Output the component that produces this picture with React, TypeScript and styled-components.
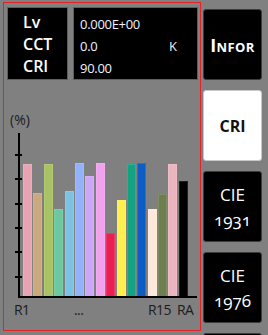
import React from "react";
import styled, { createGlobalStyle } from "styled-components";

const GlobalStyle = createGlobalStyle`
  html, body {
    margin: 0;
    padding: 0;
    background: #808080;
    overflow: hidden;
  }
  body {
    font-family: "Open Sans", "DejaVu Sans", sans-serif;
  }
`;

const bars = [
  { h: 132, color: "#e8a4b2" },
  { h: 103, color: "#caa97e" },
  { h: 132, color: "#a9c263" },
  { h: 87, color: "#6cc89e" },
  { h: 105, color: "#7cc2e2" },
  { h: 133, color: "#92b2fb" },
  { h: 120, color: "#cda7f7" },
  { h: 133, color: "#f0a2ee" },
  { h: 63, color: "#ea1e50" },
  { h: 96, color: "#fdf04e" },
  { h: 132, color: "#12a482" },
  { h: 133, color: "#0c5ec6" },
  { h: 87, color: "#fee8da" },
  { h: 102, color: "#6e7f4f" },
  { h: 132, color: "#ebb5c0" },
  { h: 115, color: "#000000" },
];

const ticks = [21, 45, 70, 94, 118, 143];

const App: React.FC = () => {
  return (
    <Screen>
      <GlobalStyle />
      <Panel>
        <TopRow>
          <NameBox>
            <Name>Lv</Name>
            <Name>CCT</Name>
            <Name>CRI</Name>
          </NameBox>
          <ValueBox>
            <Value>0.000E+00</Value>
            <Unit />
            <Value>0.0</Value>
            <Unit>K</Unit>
            <Value>90.00</Value>
            <Unit />
          </ValueBox>
        </TopRow>
        <PercentLabel>(%)</PercentLabel>
        <Plot>
          {ticks.map((t) => (
            <Tick key={t} style={{ top: t }} />
          ))}
          {bars.map((b, i) => (
            <Bar key={i} $color={b.color} style={{ height: b.h }} />
          ))}
        </Plot>
        <AxisLabels>
          <AxisLabel>R1</AxisLabel>
          <AxisLabel>...</AxisLabel>
          <AxisLabel>R15</AxisLabel>
          <AxisLabel>RA</AxisLabel>
        </AxisLabels>
      </Panel>
      <Menu>
        <MenuButton>
          <InforText>Infor</InforText>
        </MenuButton>
        <MenuButton $active>
          <ActiveText>CRI</ActiveText>
        </MenuButton>
        <MenuButton>
          <CieText>
            CIE
            <br />
            1931
          </CieText>
        </MenuButton>
        <MenuButton>
          <CieText>
            CIE
            <br />
            1976
          </CieText>
        </MenuButton>
        <MenuButton />
      </Menu>
    </Screen>
  );
};

export default App;

const Screen = styled.div`
  display: flex;
  align-items: flex-start;
  width: 268px;
  height: 335px;
  overflow: hidden;
`;

const Panel = styled.div`
  box-sizing: border-box;
  width: 198px;
  height: 329px;
  margin: 2px 0 0 3px;
  padding: 4px 2px 0 3px;
  border: 1px solid #e3222a;
  display: flex;
  flex-direction: column;
`;

const TopRow = styled.div`
  display: flex;
  gap: 5px;
`;

const NameBox = styled.div`
  box-sizing: border-box;
  width: 61px;
  height: 73px;
  padding: 3px 0 0 15px;
  background: #000;
  border: 1px solid #5e5e5e;
  display: flex;
  flex-direction: column;
`;

const Name = styled.span`
  color: #fff;
  font-size: 16px;
  font-weight: 600;
  line-height: 22px;
`;

const ValueBox = styled.div`
  box-sizing: border-box;
  width: 125px;
  height: 73px;
  padding: 5px 0 0 6px;
  background: #000;
  border: 1px solid #5e5e5e;
  display: grid;
  grid-template-columns: 89px auto;
  grid-auto-rows: 22px;
`;

const Value = styled.span`
  color: #eef2ff;
  font-size: 13px;
  line-height: 22px;
  letter-spacing: -0.3px;
`;

const Unit = styled(Value)``;

const PercentLabel = styled.span`
  margin: 32px 0 0 3px;
  font-size: 14px;
  line-height: 16px;
  color: #1c1c1c;
`;

const Plot = styled.div`
  position: relative;
  box-sizing: border-box;
  margin: 5px 0 0 11px;
  width: 179px;
  height: 165px;
  padding-left: 3px;
  border-left: 2px solid #000;
  border-bottom: 2px solid #000;
  display: flex;
  align-items: flex-end;
  gap: 1.4px;
`;

const Tick = styled.div`
  position: absolute;
  left: -5px;
  width: 7px;
  height: 2px;
  background: #000;
`;

const Bar = styled.div<{ $color: string }>`
  box-sizing: border-box;
  width: 9px;
  background: ${(p) => p.$color};
  border: 1px solid rgba(255, 255, 255, 0.12);
  border-bottom: none;
`;

const AxisLabels = styled.div`
  margin-top: 4px;
  padding-left: 7px;
  display: grid;
  grid-template-columns: 60px 74px 29px auto;
`;

const AxisLabel = styled.span`
  font-size: 14px;
  line-height: 16px;
  letter-spacing: -0.6px;
  color: #1c1c1c;
`;

const Menu = styled.div`
  margin-left: 2px;
  padding-top: 9px;
  display: flex;
  flex-direction: column;
  gap: 10px;
`;

const MenuButton = styled.div<{ $active?: boolean }>`
  box-sizing: border-box;
  width: 59px;
  height: 71px;
  flex-shrink: 0;
  border-radius: 3px;
  border: 1px solid ${(p) => (p.$active ? "#c8c8c8" : "#3c3c3c")};
  background: ${(p) => (p.$active ? "#fff" : "#000")};
  display: flex;
  align-items: center;
  justify-content: center;
  text-align: center;
`;

const InforText = styled.span`
  color: #fff;
  font-size: 18px;
  font-weight: 700;
  font-variant: small-caps;
  letter-spacing: 0.4px;
`;

const ActiveText = styled.span`
  color: #111;
  font-size: 16px;
  font-weight: 700;
`;

const CieText = styled.span`
  color: #fff;
  font-size: 17px;
  line-height: 25px;
  font-weight: 500;
  font-variant-numeric: oldstyle-nums;
`;
